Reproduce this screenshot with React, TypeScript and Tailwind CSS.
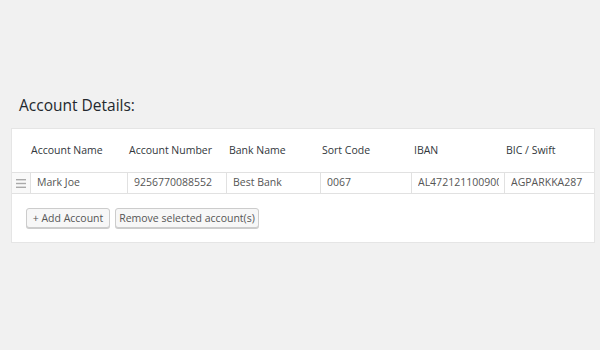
import React from "react";

const font = { fontFamily: '"Open Sans", "Noto Sans", sans-serif' };

const cols = "grid-cols-[19px_97px_99px_94px_91px_93px_91px]";

function Cell({ children, last, clip }: { children: React.ReactNode; last?: boolean; clip?: boolean }) {
  return (
    <div className={`h-full whitespace-nowrap pl-[6px] ${clip ? "pr-[5px]" : "pr-[3px]"} flex items-center text-[10.5px] text-[#555] ${last ? "" : "border-r border-[#e1e1e1]"}`}>
      <div className="overflow-hidden w-full">{children}</div>
    </div>
  );
}

export default function App() {
  return (
    <div className="w-[600px] h-[350px] bg-[#f1f1f1] overflow-hidden" style={font}>
      <div className="pt-[93px] pl-[19px] text-[15.5px] leading-[24px] text-[#23282d]">Account Details:</div>
      <div className="mt-[11px] ml-[11px] w-[584px] h-[115px] bg-white border border-[#e5e5e5] flex flex-col">
        <div className={`grid ${cols} h-[43px] items-center text-[10.5px] text-[#32373c]`}>
          <div />
          <div className="pt-[1px]">Account Name</div>
          <div className="pt-[1px] pl-[1px]">Account Number</div>
          <div className="pt-[1px] pl-[2px]">Bank Name</div>
          <div className="pt-[1px] pl-[1px]">Sort Code</div>
          <div className="pt-[1px] pl-[2px]">IBAN</div>
          <div className="pt-[1px] pl-[1px]">BIC / Swift</div>
        </div>
        <div className={`grid ${cols} h-[22px] border-y border-[#e1e1e1]`}>
          <div className="h-full flex items-center justify-center bg-[#f9f9f9] border-r border-[#e1e1e1]">
            <svg width="10" height="9" viewBox="0 0 10 9">
              <rect x="0" y="0" width="10" height="1.4" fill="#aaa" />
              <rect x="0" y="3.8" width="10" height="1.4" fill="#aaa" />
              <rect x="0" y="7.6" width="10" height="1.4" fill="#aaa" />
            </svg>
          </div>
          <Cell>Mark Joe</Cell>
          <Cell>9256770088552</Cell>
          <Cell>Best Bank</Cell>
          <Cell>0067</Cell>
          <Cell clip>AL47212110090000000235698741</Cell>
          <Cell last>AGPARKKA287</Cell>
        </div>
        <div className="flex gap-[5px] pl-[14px] pt-[14px]">
          <button className="h-[20px] w-[84px] bg-[#f7f7f7] border border-[#cccccc] rounded-[3px] text-[10.5px] leading-none text-[#555] shadow-[0_1px_0_#ccc]">+ Add Account</button>
          <button className="h-[20px] w-[144px] bg-[#f7f7f7] border border-[#cccccc] rounded-[3px] text-[10.5px] leading-none text-[#555] shadow-[0_1px_0_#ccc]">Remove selected account(s)</button>
        </div>
      </div>
    </div>
  );
}
